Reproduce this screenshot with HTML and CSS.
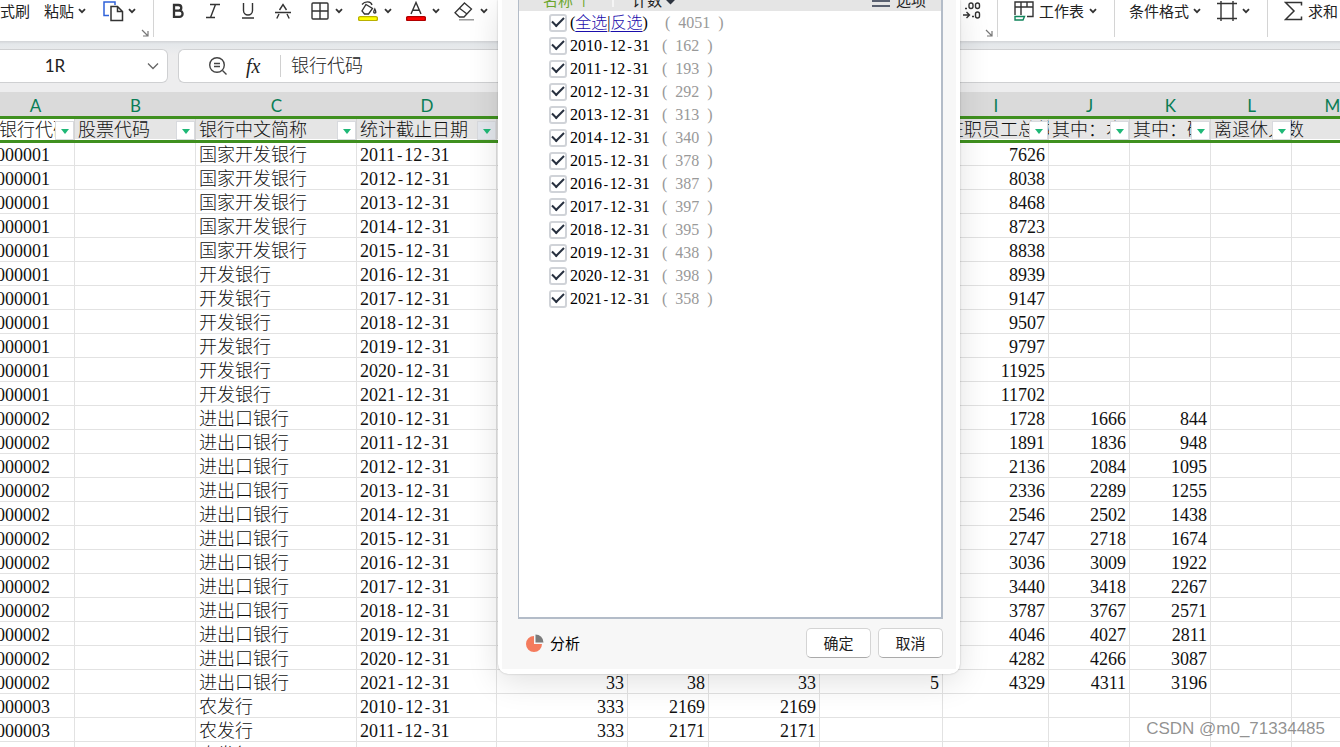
FILE: index.html
```html
<!DOCTYPE html>
<html lang="zh-CN">
<head>
<meta charset="utf-8">
<title>工作表</title>
<link rel="stylesheet" href="styles.css">
</head>
<body>
<svg class="defs" aria-hidden="true">
  <symbol id="chev" viewBox="0 0 8 6"><path d="M1 1.2 4 4.2 7 1.2" fill="none" stroke="#333" stroke-width="1.8"/></symbol>
  <symbol id="launch" viewBox="0 0 8 8"><path d="M1 1 6.5 6.5M7 2V7H2" fill="none" stroke="#777" stroke-width="1.2"/></symbol>
</svg>
<header class="toolbar">
  <div class="group clip">
    <button class="tool format">格式刷</button>
    <button class="tool paste">粘贴<svg class="chev"><use href="#chev"/></svg></button>
    <button class="tool copy" aria-label="复制"><svg width="21" height="22" viewBox="0 0 21 22" fill="none" stroke-width="1.5"><path d="M6 15.500H1V2H12V5" stroke="#2f62d9"/><path d="M8 6.500H14.500L19.500 11.500V20.500H8ZM14.500 6.500V11.500H19.500" stroke="#333"/></svg><svg class="chev"><use href="#chev"/></svg></button>
    <svg class="launch"><use href="#launch"/></svg>
  </div>
  <div class="group font">
    <button class="tool key" aria-label="加粗"><svg width="14" height="16" viewBox="0 0 14 16" fill="none" stroke="#333" stroke-width="2.300"><path d="M3 2H7.500A2.800 2.800 0 0 1 7.500 7.600H3ZM3 7.600H8.500A3.100 3.100 0 0 1 8.500 13.800H3Z"/></svg></button>
    <button class="tool key" aria-label="倾斜"><svg width="16" height="16" viewBox="0 0 16 16" fill="none" stroke="#333" stroke-width="1.400"><path d="M5 1.500H15M1 14.500H10M10.500 1.500 5.500 14.500"/></svg></button>
    <button class="tool key" aria-label="下划线"><svg width="14" height="16" viewBox="0 0 14 16" fill="none" stroke="#333" stroke-width="1.400"><path d="M2.500 0V7.500A4.500 4.500 0 0 0 11.500 7.500V0M1 15H13"/></svg></button>
    <button class="tool key" aria-label="删除线"><svg width="18" height="16" viewBox="0 0 18 16" fill="none" stroke="#333" stroke-width="1.400"><path d="M5.500 7 9 1.500 12.500 7M1 9.500H17M5 11 2.800 15.500M13 11 15.200 15.500"/></svg></button>
    <button class="tool pair first" aria-label="边框"><svg width="18" height="18" viewBox="0 0 18 18" fill="none" stroke="#333" stroke-width="1.400"><rect x="1" y="1" width="16" height="16" rx="1"/><path d="M9 1V17M1 9H17"/></svg><svg class="chev"><use href="#chev"/></svg></button>
    <button class="tool pair" aria-label="填充颜色"><svg width="20" height="20" viewBox="0 0 20 20" fill="none" stroke="#333" stroke-width="1.300"><path d="M4 3.500C7 0 13 0 14 4M8 3.500 14.500 7.500 10.500 13H6.500L4 10ZM16.800 8C15.500 10.500 15.300 12 16.800 12S18 10.500 16.800 8Z"/><rect x=".6" y="15.600" width="18.800" height="4" rx="1.500" fill="#ff0" stroke="#b9b000"/></svg><svg class="chev"><use href="#chev"/></svg></button>
    <button class="tool pair" aria-label="字体颜色"><svg width="20" height="20" viewBox="0 0 20 20" fill="none" stroke="#333" stroke-width="1.400"><path d="M5 13 10 1.500 15 13M6.700 9.300H13.300"/><rect x=".6" y="15.600" width="18.800" height="4" rx="1.500" fill="#f00" stroke="#b00000"/></svg><svg class="chev"><use href="#chev"/></svg></button>
    <button class="tool pair" aria-label="清除"><svg width="20" height="20" viewBox="0 0 20 20" fill="none" stroke="#333" stroke-width="1.300"><path d="M10.500 2 17.500 8 10 16H5.500L1 11.800ZM5.500 7.200 13 13"/><path d="M5 18.800H20" stroke="#888"/></svg><svg class="chev"><use href="#chev"/></svg></button>
    <button class="tool decimal" aria-label="减少小数位"><svg width="18" height="18" viewBox="0 0 18 18" fill="none" stroke="#333" stroke-width="1.400"><path d="M2 6.500H4M9 14.500H11M0 13H6M3.500 10 6.500 13 3.500 16"/><rect x="6" y="1" width="4" height="5.500" rx="2"/><rect x="12.500" y="1" width="4" height="5.500" rx="2"/><rect x="12.500" y="10" width="4" height="6" rx="2"/></svg></button>
    <svg class="launch"><use href="#launch"/></svg>
  </div>
  <div class="group sheet">
    <button class="tool"><svg class="lead" width="20" height="20" viewBox="0 0 20 20" fill="none" stroke="#333" stroke-width="1.400"><path d="M1 14V1H19V15.500H13M1 6H19M7 1V14M13 1V6"/><path d="M1 15.500H10.500L9 19H1Z" stroke="#11845b"/></svg>工作表<svg class="chev"><use href="#chev"/></svg></button>
  </div>
  <div class="group rules">
    <button class="tool cond">条件格式<svg class="chev"><use href="#chev"/></svg></button>
    <button class="tool crop" aria-label="行和列"><svg width="20" height="20" viewBox="0 0 20 20" fill="none" stroke="#333" stroke-width="1.400"><path d="M4 0V20M16 0V20M0 2.500H20M0 17.500H20"/></svg><svg class="chev"><use href="#chev"/></svg></button>
  </div>
  <div class="group sum">
    <button class="tool"><svg class="lead" width="19" height="20" viewBox="0 0 19 20" fill="none" stroke="#333" stroke-width="1.500"><path d="M17.500 4.500V1.500H1.500L10 10 1.500 18.500H17.500V15.500"/></svg>求和</button>
  </div>
</header>
<section class="formula-row">
  <div class="name-box">
    <input class="name-input" aria-label="名称框" value="1R">
    <svg width="12" height="8" viewBox="0 0 12 8" fill="none" stroke="#666" stroke-width="1.300"><path d="M1 1.500 6 6.500 11 1.500"/></svg>
  </div>
  <div class="formula-box">
    <svg width="20" height="20" viewBox="0 0 20 20" fill="none" stroke="#444" stroke-width="1.400"><circle cx="9" cy="9" r="7.300"/><path d="M14.500 14.500 18.500 18.500M6 7.500H12M6 10.500H12"/></svg>
    <span class="fx">fx</span>
    <input class="formula-input" aria-label="编辑栏" value="银行代码">
  </div>
</section>
<main class="sheet-area">
  <table class="grid">
    <colgroup><col class="a"><col class="b"><col class="c"><col class="d"><col class="e"><col class="s"><col class="g"><col class="h"><col class="i"><col class="s"><col class="s"><col class="s"><col class="s"></colgroup>
    <thead id="head"></thead>
    <tbody id="rows"></tbody>
  </table>
</main>
<div class="dialog" role="dialog" aria-label="筛选">
  <div class="panel">
    <div class="list-box">
      <div class="list-head">
        <span class="col-name">名称 ↑</span><span class="col-count">计数<i class="sort"></i></span><span class="options"><i class="bars"></i>选项</span>
      </div>
      <div id="checks" class="checks"></div>
    </div>
    <div class="actions">
      <button class="analysis"><svg width="18" height="18" viewBox="0 0 18 18"><path d="M8 2A8 8 0 1 0 16 10H8Z" fill="#f47b5d"/><path d="M9.500.5A8 8 0 0 1 17.500 8.500H9.500Z" fill="#7b7b7b"/></svg>分析</button>
      <button class="action">确定</button>
      <button class="action">取消</button>
    </div>
  </div>
</div>
<div class="watermark">CSDN @m0_71334485</div>
<script src="app.js"></script>
</body>
</html>
```

FILE: styles.css
```css
* { box-sizing: border-box; }
body {
  margin: 0;
  height: 100vh;
  overflow: hidden;
  position: relative;
  background: #fff;
  color: #222;
  font: 15px/20px "Noto Sans CJK SC", sans-serif;
}
button, input { font: inherit; color: inherit; border: 0; background: none; padding: 0; margin: 0; }
.defs { position: absolute; width: 0; height: 0; }
.chev { width: 8px; height: 6px; flex: none; }
.launch { width: 8px; height: 8px; flex: none; align-self: flex-end; margin: 0 4px 0 auto; }

.toolbar {
  display: grid;
  grid-template-columns: 154px 844px 117px 153px 1fr;
  height: 41px;
  overflow: hidden;
}
.group { display: flex; align-items: flex-start; height: 37px; border-right: 1px solid #d4d4d4; white-space: nowrap; min-width: 0; }
.tool { display: flex; align-items: center; gap: 8px; height: 22px; flex: none; }
.paste, .cond { gap: 4px; }
.lead { margin-right: -3px; }
.clip { gap: 17px; }
.clip .launch { margin-left: -12px; }
.copy { gap: 4px; }
.crop { gap: 5px; }
.format { margin-left: -15px; margin-right: -3px; }
.font { padding-left: 6px; }
.key { width: 35px; justify-content: center; }
.pair { width: 48px; justify-content: center; gap: 6px; }
.first { margin-left: 3px; }
.decimal { margin-left: auto; }
.font .launch { margin-left: 4px; }
.sheet { padding-left: 16px; }
.sheet .tool { gap: 5px; }
.sheet .lead { margin-right: 0; }
.rules { padding-left: 14px; gap: 16px; }
.sum { padding-left: 16px; border-right: 0; }

.formula-row {
  display: flex;
  gap: 10px;
  height: 51px;
  padding: 8px 0 9px;
  background: linear-gradient(#d2d4d7, #e4e7ea 3px, #ededee 14px);
}
.name-box, .formula-box { display: flex; align-items: center; background: #fff; border: 1px solid #cfd0d2; }
.name-box { width: 168px; border-left: 0; border-radius: 0 6px 6px 0; padding-right: 8px; }
.name-input { width: 110px; text-align: center; font: 17px/20px Lato, sans-serif; margin-right: auto; }
.formula-box { flex: 1; border-right: 0; border-radius: 6px 0 0 6px; padding-left: 29px; }
.fx { width: 52px; padding-left: 18px; font: italic 20px/24px "Liberation Serif", serif; }
.formula-input { flex: 1; height: 22px; border-left: 1px solid #d0d0d0; padding: 0 0 4px 10px; font-size: 18px; font-weight: 300; }

.sheet-area { overflow: hidden; }
.grid {
  table-layout: fixed;
  width: 1377px;
  margin-left: -4px;
  border-collapse: separate;
  border-spacing: 0;
  color: #111;
  font: 300 18px/20px "Liberation Serif", "Noto Sans CJK SC", serif;
}
.a { width: 79px; }
.b { width: 121px; }
.c { width: 161px; }
.d { width: 140px; }
.e { width: 131px; }
.g { width: 111px; }
.h { width: 123px; }
.i { width: 106px; }
.s { width: 81px; }
.grid th, .grid td { padding: 0; white-space: nowrap; font-weight: 300; }
.grid .letters th { height: 24px; padding-top: 4px; background: #dadada; color: #0a7d55; font: 17px/20px Lato, sans-serif; }
.grid .fields th {
  position: relative;
  height: 27px;
  padding: 1px 0 0 3px;
  text-align: left;
  overflow: hidden;
  background: #e5e5e5;
  border: solid #3f901f;
  border-width: 3px 0;
  box-shadow: inset -1px 0 #d4d4d4, inset 0 -1px #fff;
}
.grid .fields th:first-child { background: #fff; }
.grid .fields th:nth-child(12) { overflow: visible; z-index: 1; }
.filter {
  position: absolute;
  top: 2px;
  right: 1px;
  width: 19px;
  height: 19px;
  background: #fff;
  border: 1px solid #d8dade;
}
.filter::before { content: ""; display: block; margin: 1px auto 0; width: 0; border: 4px solid transparent; border-top: 5px solid #1fb877; border-bottom: 0; }
.fields th:nth-child(4) .filter { background: #e3e7ed; }
.grid td { height: 24px; padding-top: 2px; border: solid #e2e2e2; border-width: 0 1px 1px 0; }
.grid tbody tr:first-child td { height: 23px; }
.grid td.text { padding-left: 3px; }
.grid td.code { padding-left: 0; }
.grid td.num { text-align: right; padding-right: 3px; }
.dash { font-family: "Liberation Mono", monospace; font-size: 15px; line-height: 0; }

.dialog {
  position: absolute;
  z-index: 2;
  top: 0;
  left: 498px;
  width: 462px;
  padding: 0 4px 5px;
  background: #fff;
  border-radius: 0 0 10px 10px;
  box-shadow: 0 0 2px rgba(0, 0, 0, .25), 0 8px 32px rgba(0, 0, 0, .12);
}
.panel { background: #f7f7f7; padding: 0 13px 11px 16px; }
.list-box { height: 619px; border: solid #b3bcc8; border-width: 0 2px 2px 1px; background: #fff; }
.list-head { display: flex; align-items: flex-end; height: 11px; overflow: hidden; background: #e5e5e5; padding: 0 15px 4px 24px; line-height: 14px; }
.col-name { width: 69px; color: #6ba52c; }
.col-count { display: flex; align-items: flex-end; gap: 5px; padding-left: 18px; border-left: 2px solid #f5f5f5; }
.sort { width: 7px; height: 7px; margin-bottom: 4px; background: #2e3440; transform: rotate(45deg); }
.options { display: flex; align-items: flex-end; gap: 6px; margin-left: auto; }
.bars { width: 18px; height: 7px; border: solid #596070; border-width: 2px 0; }
.checks { padding: 0 0 0 30px; }
.check { display: flex; align-items: center; height: 23px; font: 300 16px/22px "Liberation Serif", "Noto Sans CJK SC", serif; color: #000; }
.check label { width: 92px; white-space: nowrap; }
.check .dash { font-size: 13px; }
.all { width: 95px; white-space: nowrap; }
.all a { color: #1a0dab; text-underline-offset: 3px; }
.box {
  appearance: none;
  width: 18px;
  height: 18px;
  margin-right: 3px;
  flex: none;
  border: 2px solid #d0d3d8;
  border-radius: 3px;
  background: #fff;
  display: grid;
  place-items: center;
}
.box:checked::before { content: ""; width: 10px; height: 5px; margin-bottom: 4px; border: solid #27303f; border-width: 0 0 2px 2px; transform: rotate(-45deg); }
.count { display: flex; gap: 8px; color: #999; }
.actions { display: flex; align-items: center; gap: 7px; padding-top: 9px; }
.analysis { display: flex; align-items: center; gap: 6px; margin: 0 auto 0 8px; color: #000; }
.action { width: 65px; height: 30px; background: #fff; border: 1px solid #d4d4d4; border-bottom-color: #aaa; border-radius: 5px; }
.watermark { position: absolute; right: 15px; bottom: 8px; color: rgba(110, 110, 110, .75); font: 17px/20px "Liberation Sans", sans-serif; }
```

FILE: app.js
```js
const dated = s => s.replace(/-/g, '<span class="dash">-</span>');

const fields = ['银行代码', '股票代码', '银行中文简称', '统计截止日期', '', '', '', '', '在职员工总数', '其中：本', '其中：硕', '离退休人数', ''];
document.getElementById('head').innerHTML =
  '<tr class="letters">' + [...'ABCDEFGHIJKLM'].map(l => `<th>${l}</th>`).join('') + '</tr>' +
  '<tr class="fields">' + fields.map(f => `<th>${f}${f ? `<button class="filter" aria-label="筛选 ${f}"></button>` : ''}</th>`).join('') + '</tr>';

const staff = [7626, 8038, 8468, 8723, 8838, 8939, 9147, 9507, 9797, 11925, 11702];
const rows = staff.map((n, i) => ['000001', i < 5 ? '国家开发银行' : '开发银行', 2011 + i, '', '', '', '', n, '', '']);
const exim = [
  [1728, 1666, 844], [1891, 1836, 948], [2136, 2084, 1095], [2336, 2289, 1255],
  [2546, 2502, 1438], [2747, 2718, 1674], [3036, 3009, 1922], [3440, 3418, 2267],
  [3787, 3767, 2571], [4046, 4027, 2811], [4282, 4266, 3087], [4329, 4311, 3196]
];
exim.forEach((v, i) => rows.push(['000002', '进出口银行', 2010 + i, ...(i === 11 ? [33, 38, 33, 5] : ['', '', '', '']), ...v]));
rows.push(['000003', '农发行', 2010, 333, 2169, 2169, '', '', '', '']);
rows.push(['000003', '农发行', 2011, 333, 2171, 2171, '', '', '', '']);
rows.push(['000003', '农发行', 2012, '', '', '', '', '', '', '']);
document.getElementById('rows').innerHTML = rows.map(([code, name, year, ...nums]) =>
  `<tr><td class="text code">${code}</td><td></td><td class="text">${name}</td><td class="text">${dated(year + '-12-31')}</td>` +
  nums.map(n => `<td class="num">${n}</td>`).join('') + '<td></td><td></td></tr>').join('');

const counts = [162, 193, 292, 313, 340, 378, 387, 397, 395, 438, 398, 358];
const count = n => `<span class="count"><span>(</span><span>${n}</span><span>)</span></span>`;
document.getElementById('checks').innerHTML =
  `<div class="check"><input type="checkbox" class="box" id="all" aria-label="全选" checked><span class="all">(<a href="#">全选</a>|<a href="#">反选</a>)</span>${count(4051)}</div>` +
  counts.map((n, i) => `<div class="check"><input type="checkbox" class="box" id="d${i}" checked><label for="d${i}">${dated(2010 + i + '-12-31')}</label>${count(n)}</div>`).join('');
```
